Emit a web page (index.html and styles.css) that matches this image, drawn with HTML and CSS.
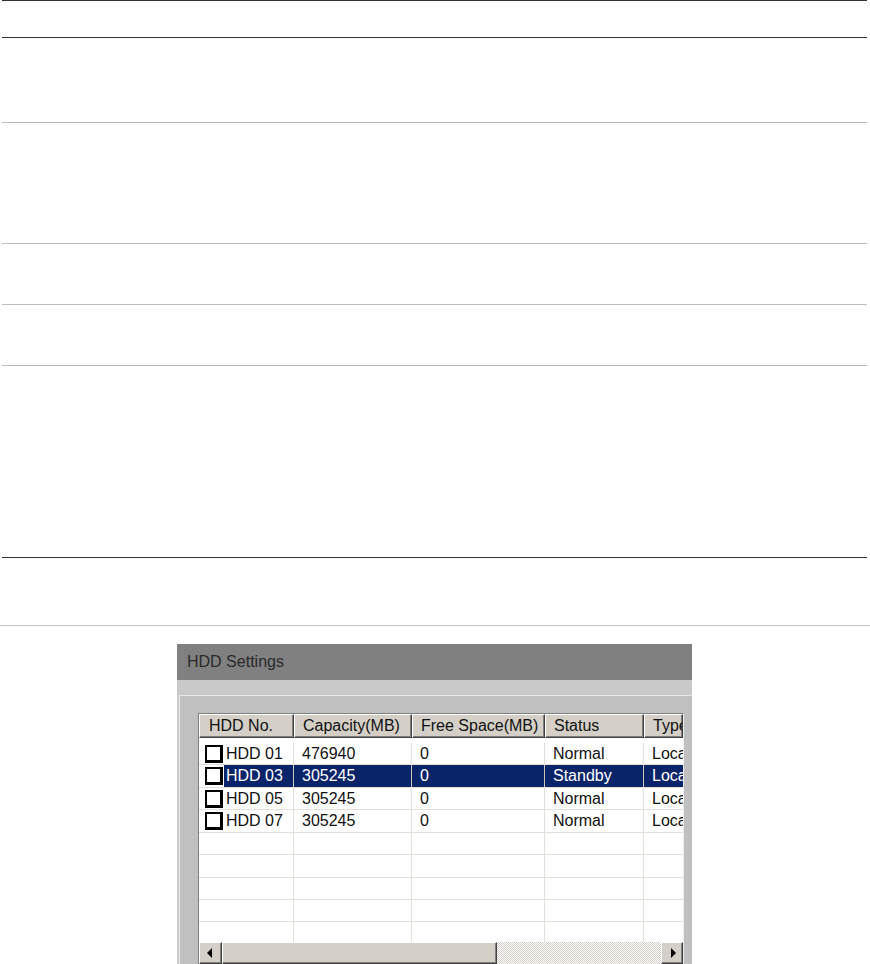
FILE: index.html
```html
<!DOCTYPE html>
<html lang="en">
<head>
<meta charset="utf-8">
<title>HDD Settings</title>
<link rel="stylesheet" href="styles.css">
</head>
<body>
<div class="rules">
  <div class="rule-row r-head"></div>
  <div class="rule-row r-a"></div>
  <div class="rule-row r-b"></div>
  <div class="rule-row r-c"></div>
  <div class="rule-row r-d"></div>
  <div class="rule-row r-e"></div>
</div>
<div class="note"></div>
<div class="shot">
  <div class="dlg">
    <div class="dlg-title">HDD Settings</div>
    <div class="dlg-band"></div>
    <div class="dlg-panel">
      <div class="tbl">
        <div class="thead">
          <div class="th">HDD No.</div>
          <div class="th">Capacity(MB)</div>
          <div class="th">Free Space(MB)</div>
          <div class="th">Status</div>
          <div class="th">Type</div>
        </div>
        <div class="tbody">
          <div class="tr">
            <div class="td c1"><span class="cb"></span><span class="lbl">HDD 01</span></div>
            <div class="td">476940</div>
            <div class="td">0</div>
            <div class="td">Normal</div>
            <div class="td">Local</div>
          </div>
          <div class="tr sel">
            <div class="td c1"><span class="cb"></span><span class="lbl">HDD 03</span></div>
            <div class="td">305245</div>
            <div class="td">0</div>
            <div class="td">Standby</div>
            <div class="td">Local</div>
          </div>
          <div class="tr">
            <div class="td c1"><span class="cb"></span><span class="lbl">HDD 05</span></div>
            <div class="td">305245</div>
            <div class="td">0</div>
            <div class="td">Normal</div>
            <div class="td">Local</div>
          </div>
          <div class="tr">
            <div class="td c1"><span class="cb"></span><span class="lbl">HDD 07</span></div>
            <div class="td">305245</div>
            <div class="td">0</div>
            <div class="td">Normal</div>
            <div class="td">Local</div>
          </div>
          <div class="tr"><div class="td"></div><div class="td"></div><div class="td"></div><div class="td"></div><div class="td"></div></div>
          <div class="tr"><div class="td"></div><div class="td"></div><div class="td"></div><div class="td"></div><div class="td"></div></div>
          <div class="tr"><div class="td"></div><div class="td"></div><div class="td"></div><div class="td"></div><div class="td"></div></div>
          <div class="tr"><div class="td"></div><div class="td"></div><div class="td"></div><div class="td"></div><div class="td"></div></div>
          <div class="tr"><div class="td"></div><div class="td"></div><div class="td"></div><div class="td"></div><div class="td"></div></div>
        </div>
        <div class="hscroll">
          <div class="sb-btn sb-left"><span class="arrow-l"></span></div>
          <div class="sb-thumb"></div>
          <div class="sb-track"></div>
          <div class="sb-btn sb-right"><span class="arrow-r"></span></div>
        </div>
      </div>
    </div>
  </div>
</div>
</body>
</html>
```
FILE: styles.css
```css
html, body {
  margin: 0;
  padding: 0;
  background: #fff;
  overflow: hidden;
  height: 964px;
}

body {
  font-family: "Liberation Sans", Arial, sans-serif;
  font-size: 16px;
  color: #000;
}

.rules {
  margin: 0 3px 0 2px;
  border-top: 1px solid #333;
}

.rule-row {
  border-bottom: 1px solid #bdbdbd;
}

.r-head { height: 36px; border-bottom-color: #333; }
.r-a { height: 84px; }
.r-b { height: 120px; }
.r-c { height: 60px; }
.r-d { height: 60px; }
.r-e { height: 191px; border-bottom-color: #333; }

.note {
  height: 67px;
  border-bottom: 1px solid #c4c4c4;
}

.shot {
  margin: 18px 0 0 177px;
  width: 515px;
}

.dlg {
  background: #c9c9c9;
}

.dlg-title {
  height: 36px;
  line-height: 36px;
  background: #808080;
  color: #2a2a2a;
  padding-left: 10px;
  font-size: 16px;
}

.dlg-band {
  height: 15px;
}

.dlg-panel {
  margin-left: 2px;
  border-top: 1px solid #e8e8e8;
  border-left: 1px solid #e8e8e8;
  background: #c0c0c0;
  padding: 17px 8px 0 18px;
}

.tbl {
  border-top: 1px solid #808080;
  border-left: 1px solid #808080;
  border-right: 1px solid #ececec;
  background: #fff;
}

.thead,
.tr {
  display: grid;
  grid-template-columns: 95px 118px 133px 99px 39px;
}

.thead {
  height: 24px;
  background: #fff;
}

.th {
  box-sizing: border-box;
  background: #d4d0c8;
  border-top: 1px solid #fff;
  border-left: 1px solid #fff;
  border-right: 1px solid #404040;
  border-bottom: 1px solid #404040;
  box-shadow: inset -1px -1px 0 #808080;
  padding-left: 8px;
  line-height: 21px;
  white-space: nowrap;
  overflow: hidden;
  color: #111;
}

.th:first-child {
  padding-left: 9px;
}

.tbody {
  height: 204px;
  overflow: hidden;
  padding-top: 5px;
  box-sizing: border-box;
  background: #fff;
}

.tr {
  height: 22.43px;
  box-sizing: border-box;
  border-bottom: 1px solid #e3e0d9;
}

.td {
  border-right: 1px solid #e3e0d9;
  padding-left: 8px;
  line-height: 21px;
  white-space: nowrap;
  overflow: hidden;
  color: #111;
}

.td:last-child {
  border-right: none;
}

.td.c1 {
  padding-left: 6px;
  display: flex;
  align-items: center;
}

.cb {
  box-sizing: border-box;
  width: 18px;
  height: 18px;
  border: 2px solid #000;
  border-right-width: 3px;
  border-bottom-width: 3px;
  background: #fff;
  flex: none;
}

.lbl {
  flex: 1;
  align-self: stretch;
  padding-left: 2px;
  margin-left: 1px;
}

.tr.sel .td:not(.c1),
.tr.sel .lbl {
  background: #0a246a;
  color: #fff;
}

.tr.sel .td {
  border-right-color: #c9c7c0;
}

.hscroll {
  display: flex;
  height: 22px;
  background: #d4d0c8;
}

.sb-btn,
.sb-thumb {
  box-sizing: border-box;
  background: #d4d0c8;
  border-top: 1px solid #fff;
  border-left: 1px solid #fff;
  border-right: 1px solid #404040;
  border-bottom: 1px solid #404040;
  box-shadow: inset -1px -1px 0 #808080;
}

.sb-btn {
  width: 23px;
  display: flex;
  align-items: center;
  justify-content: center;
}

.sb-right {
  width: 22px;
}

.sb-thumb {
  width: 275px;
}

.sb-track {
  flex: 1;
  background: repeating-conic-gradient(#d4d0c8 0 25%, #fff 0 50%) 0 0 / 2px 2px;
}

.arrow-l {
  width: 0;
  height: 0;
  border-top: 5px solid transparent;
  border-bottom: 5px solid transparent;
  border-right: 5px solid #000;
  margin-left: -3px;
}

.arrow-r {
  width: 0;
  height: 0;
  border-top: 5px solid transparent;
  border-bottom: 5px solid transparent;
  border-left: 5px solid #000;
  margin-left: 2px;
}
```
